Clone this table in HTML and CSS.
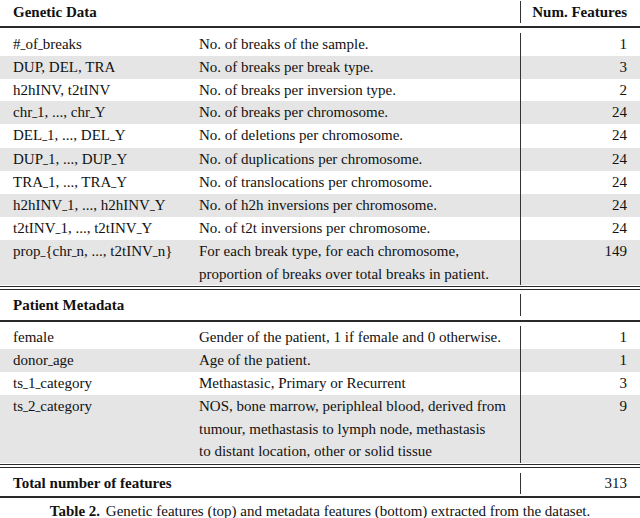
FILE: index.html
```html
<!DOCTYPE html>
<html>
<head>
<meta charset="utf-8">
<link rel="stylesheet" href="styles.css">
</head>
<body>
<div class="page">
  <div class="head first">
    <div class="c1 b">Genetic Data</div><div class="c2"></div><div class="c3 b">Num. Features</div>
  </div>
  <div class="rule"></div>
  <div class="tbody first-body">
    <div class="row"><div class="c1">#<span class="us">_</span>of<span class="us">_</span>breaks</div><div class="c2">No. of breaks of the sample.</div><div class="c3">1</div></div>
    <div class="row gray"><div class="c1">DUP, DEL, TRA</div><div class="c2">No. of breaks per break type.</div><div class="c3">3</div></div>
    <div class="row"><div class="c1">h2hINV, t2tINV</div><div class="c2">No. of breaks per inversion type.</div><div class="c3">2</div></div>
    <div class="row gray"><div class="c1">chr<span class="us">_</span>1, ..., chr<span class="us">_</span>Y</div><div class="c2">No. of breaks per chromosome.</div><div class="c3">24</div></div>
    <div class="row"><div class="c1">DEL<span class="us">_</span>1, ..., DEL<span class="us">_</span>Y</div><div class="c2">No. of deletions per chromosome.</div><div class="c3">24</div></div>
    <div class="row gray"><div class="c1">DUP<span class="us">_</span>1, ..., DUP<span class="us">_</span>Y</div><div class="c2">No. of duplications per chromosome.</div><div class="c3">24</div></div>
    <div class="row"><div class="c1">TRA<span class="us">_</span>1, ..., TRA<span class="us">_</span>Y</div><div class="c2">No. of translocations per chromosome.</div><div class="c3">24</div></div>
    <div class="row gray"><div class="c1">h2hINV<span class="us">_</span>1, ..., h2hINV<span class="us">_</span>Y</div><div class="c2">No. of h2h inversions per chromosome.</div><div class="c3">24</div></div>
    <div class="row"><div class="c1">t2tINV<span class="us">_</span>1, ..., t2tINV<span class="us">_</span>Y</div><div class="c2">No. of t2t inversions per chromosome.</div><div class="c3">24</div></div>
    <div class="row gray"><div class="c1">prop<span class="us">_</span>{chr<span class="us">_</span>n, ..., t2tINV<span class="us">_</span>n}</div><div class="c2">For each break type, for each chromosome,<br>proportion of breaks over total breaks in patient.</div><div class="c3">149</div></div>
  </div>
  <div class="drule"></div>
  <div class="head">
    <div class="c1 b">Patient Metadata</div><div class="c2"></div><div class="c3"></div>
  </div>
  <div class="rule"></div>
  <div class="tbody">
    <div class="row"><div class="c1">female</div><div class="c2">Gender of the patient, 1 if female and 0 otherwise.</div><div class="c3">1</div></div>
    <div class="row gray"><div class="c1">donor<span class="us">_</span>age</div><div class="c2">Age of the patient.</div><div class="c3">1</div></div>
    <div class="row"><div class="c1">ts<span class="us">_</span>1<span class="us">_</span>category</div><div class="c2">Methastasic, Primary or Recurrent</div><div class="c3">3</div></div>
    <div class="row gray"><div class="c1">ts<span class="us">_</span>2<span class="us">_</span>category</div><div class="c2">NOS, bone marrow, periphleal blood, derived from<br>tumour, methastasis to lymph node, methastasis<br>to distant location, other or solid tissue</div><div class="c3">9</div></div>
  </div>
  <div class="drule"></div>
  <div class="head total">
    <div class="c1 b">Total number of features</div><div class="c2"></div><div class="c3">313</div>
  </div>
  <div class="rule"></div>
  <p class="caption"><b class="cap-label">Table 2.</b> Genetic features (top) and metadata features (bottom) extracted from the dataset.</p>
</div>
</body>
</html>
```
FILE: styles.css
```css
html, body {
  margin: 0;
  padding: 0;
  background: #ffffff;
}
body {
  font-family: "Liberation Serif", "Times New Roman", serif;
  font-size: 15px;
  color: #111111;
}
.page {
  width: 640px;
}
.head,
.row {
  display: grid;
  grid-template-columns: 199px 321px 120px;
}
.head {
  padding: 4px 0 4px;
  line-height: 22px;
}
.head.first {
  padding: 1px 0 3px;
}
.head.total {
  padding: 5px 0 2px;
  line-height: 21px;
}
.row {
  line-height: 22.6px;
}
.c1 {
  padding-left: 13px;
  white-space: nowrap;
}
.c3 {
  border-left: 1px solid #333333;
  text-align: right;
  padding-right: 13px;
}
.b {
  font-weight: bold;
}
.gray {
  background: #e5e5e5;
}
.tbody {
  padding-top: 4px;
}
.tbody.first-body {
  padding-top: 5px;
}
.rule {
  height: 2px;
  background: #2a2a2a;
}
.drule {
  margin-top: 1px;
  height: 2px;
  border-top: 1px solid #2a2a2a;
  border-bottom: 1px solid #2a2a2a;
}
.us {
  font-size: 0.65em;
  vertical-align: 0.15em;
  font-weight: bold;
}
.caption {
  margin: 0;
  text-align: center;
  line-height: 26px;
  font-size: 15px;
}
.cap-label {
  margin-right: 2px;
}
```
